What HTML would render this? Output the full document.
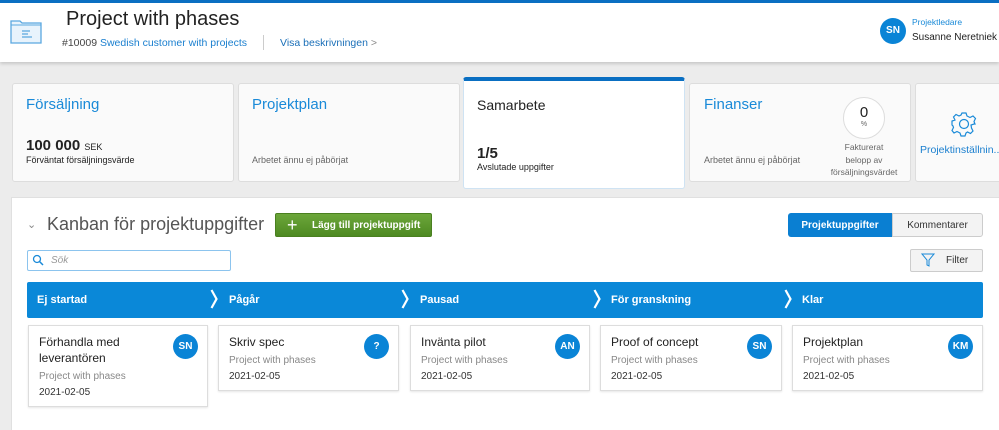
<!DOCTYPE html>
<html><head><meta charset="utf-8"><style>
*{margin:0;padding:0;box-sizing:border-box}
html,body{width:999px;height:430px;overflow:hidden}
body{background:#ececec;font-family:"Liberation Sans","DejaVu Sans",sans-serif;position:relative;color:#222}
.a{position:absolute}
.hdr{left:0;top:0;width:999px;height:62px;background:#fff;border-top:3px solid #0a6fc2;box-shadow:0 2px 3px rgba(0,0,0,.15)}
.tile{background:#fafafa;border:1px solid #ddd;border-radius:3px}
.tt{font-size:15px;color:#1a8ad8}
.sm{font-size:10px;color:#666}
.av{width:25px;height:25px;border-radius:50%;background:#0a84d6;color:#fff;font-size:10px;font-weight:bold;text-align:center;line-height:25px}
.card{background:#fff;border:1px solid #ddd;box-shadow:0 1px 2px rgba(0,0,0,.1)}
.card .t{position:absolute;left:10px;top:8px;font-size:12px;color:#222;line-height:16px}
.card .p{position:absolute;left:10px;font-size:10px;color:#888}
.card .d{position:absolute;left:10px;font-size:10px;color:#333}
.card .av{position:absolute;right:9px;top:8px}
.col{font-size:11px;font-weight:bold;color:#fff;top:294px}
.chev{top:289px}
</style></head><body>
<div class="a hdr"></div>
<svg class="a" style="left:9px;top:17px" width="34" height="28" viewBox="0 0 34 28"><path d="M2 4h9l2 2h19v20H2z" fill="#e8f3fc" stroke="#5aa8e0" stroke-width="1.3"/><path d="M2 8h30" stroke="#5aa8e0" stroke-width="1"/><path d="M13 14h8M13 17h6M13 20h10" stroke="#5aa8e0" stroke-width="1.2"/></svg>
<div class="a" style="left:66px;top:8px;font-size:20px;color:#222">Project with phases</div>
<div class="a" style="left:62px;top:37px;font-size:10.5px;color:#444">#10009 <span style="color:#1a7fcf">Swedish customer with projects</span></div>
<div class="a" style="left:263px;top:35px;width:1px;height:15px;background:#ccc"></div>
<div class="a" style="left:280px;top:37px;font-size:10.5px;color:#1a6fb8">Visa beskrivningen <span style="color:#888">&gt;</span></div>
<div class="a av" style="left:880px;top:18px;width:26px;height:26px;line-height:26px">SN</div>
<div class="a" style="left:912px;top:17px;font-size:8.5px;color:#1a8ad8">Projektledare</div>
<div class="a" style="left:912px;top:32px;font-size:10px;color:#222;white-space:nowrap">Susanne Neretniek</div>

<div class="a tile" style="left:12px;top:83px;width:222px;height:99px"></div>
<div class="a tt" style="left:26px;top:96px">Försäljning</div>
<div class="a" style="left:26px;top:137px;font-size:15px;font-weight:bold;color:#222">100 000 <span style="font-size:9px;font-weight:normal">SEK</span></div>
<div class="a" style="left:26px;top:155px;font-size:9px;color:#222">Förväntat försäljningsvärde</div>
<div class="a tile" style="left:238px;top:83px;width:222px;height:99px"></div>
<div class="a tt" style="left:252px;top:96px">Projektplan</div>
<div class="a sm" style="left:252px;top:155px;font-size:9px">Arbetet ännu ej påbörjat</div>
<div class="a" style="left:463px;top:77px;width:222px;height:112px;background:#fff;border:1px solid #cfe3f3;border-top:4px solid #0a6fc2;border-radius:3px"></div>
<div class="a" style="left:477px;top:97px;font-size:14px;color:#222">Samarbete</div>
<div class="a" style="left:477px;top:145px;font-size:15px;font-weight:bold;color:#222">1/5</div>
<div class="a" style="left:477px;top:162px;font-size:9px;color:#222">Avslutade uppgifter</div>
<div class="a tile" style="left:689px;top:83px;width:222px;height:99px"></div>
<div class="a tt" style="left:704px;top:96px">Finanser</div>
<div class="a sm" style="left:704px;top:155px;font-size:9px">Arbetet ännu ej påbörjat</div>
<div class="a" style="left:843px;top:97px;width:42px;height:42px;border:1px solid #ddd;border-radius:50%;background:#fff;text-align:center"><div style="font-size:15px;margin-top:6px">0</div><div style="font-size:7px;color:#666">%</div></div>
<div class="a" style="left:824px;top:141px;width:80px;text-align:center;font-size:8.5px;color:#666;line-height:12.5px;white-space:nowrap">Fakturerat<br>belopp av<br>försäljningsvärdet</div>
<div class="a tile" style="left:915px;top:83px;width:90px;height:99px"></div>
<svg class="a" style="left:951px;top:111px" width="26" height="26" viewBox="0 0 26 26"><path d="M11 2h4l1 3 3 1.5 3-1.5 2.5 2.5-1.5 3L24 13l-1 0-3 1 .5 3 1.5 3-2.5 2.5-3-1.5L15 22l-1 3h-4l-1-3-3-1.5-3 1.5L1 19.5l1.5-3L2 15l-1-1v-4l3-1L2.5 6 5 3.5l3 1.5L10 4z" fill="none" stroke="#1a8ad8" stroke-width="1.2"/><circle cx="13" cy="13" r="4.5" fill="none" stroke="#1a8ad8" stroke-width="1.2"/></svg>
<div class="a" style="left:920px;top:144px;font-size:10.5px;color:#1a7fcf;white-space:nowrap">Projektinställnin...</div>

<div class="a" style="left:11px;top:197px;width:988px;height:233px;background:#fff;border:1px solid #e0e0e0;border-bottom:none;border-right:none"></div>
<div class="a" style="left:27px;top:218px;font-size:11px;color:#888">&#8964;</div>
<div class="a" style="left:47px;top:214px;font-size:18px;color:#555">Kanban för projektuppgifter</div>
<div class="a" style="left:275px;top:213px;width:157px;height:24px;background:linear-gradient(#6ca63a,#4e8a22);border:1px solid #4a8020;border-radius:2px;color:#fff;font-size:10px;font-weight:bold;line-height:24px;padding-left:36px">Lägg till projektuppgift</div>
<div class="a" style="left:287px;top:216px;color:#fff;font-size:18px;line-height:18px">+</div>
<div class="a" style="left:788px;top:213px;width:104px;height:24px;background:#0a7fd2;border-radius:3px 0 0 3px;color:#fff;font-size:10px;font-weight:bold;line-height:25px;text-align:center">Projektuppgifter</div>
<div class="a" style="left:892px;top:213px;width:91px;height:24px;background:#f3f3f3;border:1px solid #ccc;border-radius:0 3px 3px 0;color:#333;font-size:10px;line-height:23px;text-align:center">Kommentarer</div>
<div class="a" style="left:27px;top:250px;width:204px;height:21px;border:1px solid #8cc4ee;border-radius:2px"></div>
<svg class="a" style="left:32px;top:254px" width="12" height="12" viewBox="0 0 12 12"><circle cx="5" cy="5" r="3.5" fill="none" stroke="#1a8ad8" stroke-width="1.3"/><path d="M7.5 7.5l3.5 3.5" stroke="#1a8ad8" stroke-width="1.5"/></svg>
<div class="a" style="left:51px;top:255px;font-size:10px;color:#999;font-style:italic">Sök</div>
<div class="a" style="left:910px;top:249px;width:73px;height:23px;background:#f3f3f3;border:1px solid #ccc;border-radius:2px;font-size:10px;color:#333;line-height:22px;padding-left:35px">Filter</div>
<svg class="a" style="left:921px;top:253px" width="14" height="14" viewBox="0 0 14 14"><path d="M1 1h12L8 7v6l-2-1V7z" fill="none" stroke="#1a8ad8" stroke-width="1"/></svg>

<div class="a" style="left:27px;top:282px;width:956px;height:36px;background:#0a88d8;border-radius:2px"></div>
<div class="a col" style="left:37px">Ej startad</div>
<svg class="a chev" style="left:210px" width="8" height="20" viewBox="0 0 8 20"><path d="M1.5 1l5 9-5 9" fill="none" stroke="#fff" stroke-width="2.2"/></svg><div class="a col" style="left:229px">Pågår</div>
<svg class="a chev" style="left:401px" width="8" height="20" viewBox="0 0 8 20"><path d="M1.5 1l5 9-5 9" fill="none" stroke="#fff" stroke-width="2.2"/></svg><div class="a col" style="left:420px">Pausad</div>
<svg class="a chev" style="left:593px" width="8" height="20" viewBox="0 0 8 20"><path d="M1.5 1l5 9-5 9" fill="none" stroke="#fff" stroke-width="2.2"/></svg><div class="a col" style="left:611px">För granskning</div>
<svg class="a chev" style="left:784px" width="8" height="20" viewBox="0 0 8 20"><path d="M1.5 1l5 9-5 9" fill="none" stroke="#fff" stroke-width="2.2"/></svg><div class="a col" style="left:802px">Klar</div>

<div class="a card" style="left:28px;top:325px;width:180px;height:82px"><div class="t">Förhandla med<br>leverantören</div><div class="av">SN</div><div class="p" style="top:45px">Project with phases</div><div class="d" style="top:61px">2021-02-05</div></div>
<div class="a card" style="left:218px;top:325px;width:181px;height:66px"><div class="t">Skriv spec</div><div class="av">?</div><div class="p" style="top:29px">Project with phases</div><div class="d" style="top:45px">2021-02-05</div></div>
<div class="a card" style="left:410px;top:325px;width:180px;height:66px"><div class="t">Invänta pilot</div><div class="av">AN</div><div class="p" style="top:29px">Project with phases</div><div class="d" style="top:45px">2021-02-05</div></div>
<div class="a card" style="left:600px;top:325px;width:182px;height:66px"><div class="t">Proof of concept</div><div class="av">SN</div><div class="p" style="top:29px">Project with phases</div><div class="d" style="top:45px">2021-02-05</div></div>
<div class="a card" style="left:792px;top:325px;width:191px;height:66px"><div class="t">Projektplan</div><div class="av">KM</div><div class="p" style="top:29px">Project with phases</div><div class="d" style="top:45px">2021-02-05</div></div>
</body></html>
